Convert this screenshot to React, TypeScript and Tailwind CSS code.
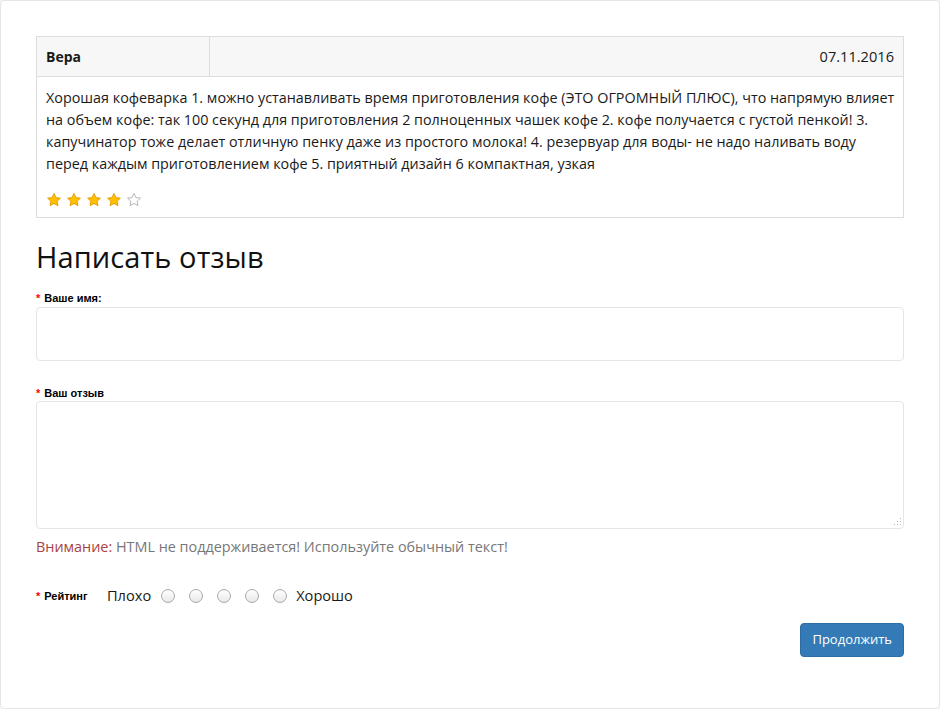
import React from "react";

const Star = ({ filled }: { filled: boolean }) => (
  <svg width="16" height="16" viewBox="0 0 24 24">
    <path
      d="M12 2.3l2.9 6.1 6.7.8-4.9 4.6 1.3 6.7L12 17.2l-6 3.3 1.3-6.7-4.9-4.6 6.7-.8z"
      fill={filled ? "#ffc000" : "#ffffff"}
      stroke={filled ? "#e39a00" : "#b0b0b0"}
      strokeWidth="1.4"
      strokeLinejoin="round"
    />
  </svg>
);

const Radio = () => (
  <span className="inline-block w-[14px] h-[14px] rounded-full border border-[#a9a9a9] bg-gradient-to-b from-white to-[#e8e8e8]" />
);

export default function App() {
  const body = "font-['Open_Sans',sans-serif]";
  const label = "font-['Liberation_Sans',Arial,sans-serif] font-bold text-[11px] text-black";
  return (
    <div className="w-[940px] h-[709px] bg-[#f5f5f5] overflow-hidden">
      <div className={`w-[940px] h-[709px] bg-white border border-[#e6e6e6] rounded-[4px] pt-[35px] px-[35px] ${body}`}>
        {/* review table */}
        <div className="w-[868px] border border-[#dddddd]">
          <div className="flex h-[40px] bg-[#f7f7f7] border-b border-[#dddddd]">
            <div className="w-[173px] border-r border-[#dddddd] flex items-center px-[9px] text-[14px] font-bold text-[#1a1a1a]">
              Вера
            </div>
            <div className="flex-1 flex items-center justify-end px-[9px] text-[14.6px] text-[#1a1a1a]">
              07.11.2016
            </div>
          </div>
          <div className="px-[9px] pt-[10px] pb-[9px] text-[14.35px] leading-[22px] text-[#1a1a1a]">
            <p className="whitespace-nowrap">
              Хорошая кофеварка 1. можно устанавливать время приготовления кофе (ЭТО ОГРОМНЫЙ ПЛЮС), что напрямую влияет
              <br />
              на объем кофе: так 100 секунд для приготовления 2 полноценных чашек кофе 2. кофе получается с густой пенкой! 3.
              <br />
              капучинатор тоже делает отличную пенку даже из простого молока! 4. резервуар для воды- не надо наливать воду
              <br />
              перед каждым приготовлением кофе 5. приятный дизайн 6 компактная, узкая
            </p>
            <div className="flex gap-[4px] mt-[17px]">
              <Star filled />
              <Star filled />
              <Star filled />
              <Star filled />
              <Star filled={false} />
            </div>
          </div>
        </div>

        <h2 className="mt-[19px] text-[29px] leading-[40px] text-[#111] tracking-[0.1px]">Написать отзыв</h2>

        <div className="mt-[14px]">
          <div className={`${label} leading-[14px]`}>
            <span className="text-[#f00] mr-[4px]">*</span>Ваше имя:
          </div>
          <div className="mt-[2px] w-[868px] h-[54px] border border-[#e5e5e5] rounded-[4px] bg-white" />
        </div>

        <div className="mt-[25px]">
          <div className={`${label} leading-[14px]`}>
            <span className="text-[#f00] mr-[4px]">*</span>Ваш отзыв
          </div>
          <div className="relative mt-[1px] w-[868px] h-[128px] border border-[#e5e5e5] rounded-[4px] bg-white">
            <svg className="absolute right-[1px] bottom-[1px]" width="10" height="10" viewBox="0 0 10 10">
              <g fill="#b5b5b5">
                <rect x="8" y="1" width="1" height="1" />
                <rect x="8" y="4" width="1" height="1" />
                <rect x="5" y="4" width="1" height="1" />
                <rect x="8" y="7" width="1" height="1" />
                <rect x="5" y="7" width="1" height="1" />
                <rect x="2" y="7" width="1" height="1" />
              </g>
            </svg>
          </div>
        </div>

        <p className="mt-[8px] text-[14.4px] leading-[20px] text-[#777]">
          <span className="text-[#a94442]">Внимание:</span> HTML не поддерживается! Используйте обычный текст!
        </p>

        <div className="mt-[28px] flex items-center h-[22px]">
          <div className={`${label} w-[71px]`}>
            <span className="text-[#f00] mr-[4px]">*</span>Рейтинг
          </div>
          <span className="text-[14.6px] text-[#1a1a1a] mr-[10px]">Плохо</span>
          <div className="flex items-center gap-[14px]">
            <Radio />
            <Radio />
            <Radio />
            <Radio />
            <Radio />
          </div>
          <span className="text-[14.6px] text-[#1a1a1a] ml-[9px]">Хорошо</span>
        </div>

        <div className="w-[868px] flex justify-end mt-[16px]">
          <button className="h-[34px] px-[11px] bg-[#337ab7] border border-[#2e6da4] rounded-[4px] text-white text-[13px]">
            Продолжить
          </button>
        </div>
      </div>
    </div>
  );
}
